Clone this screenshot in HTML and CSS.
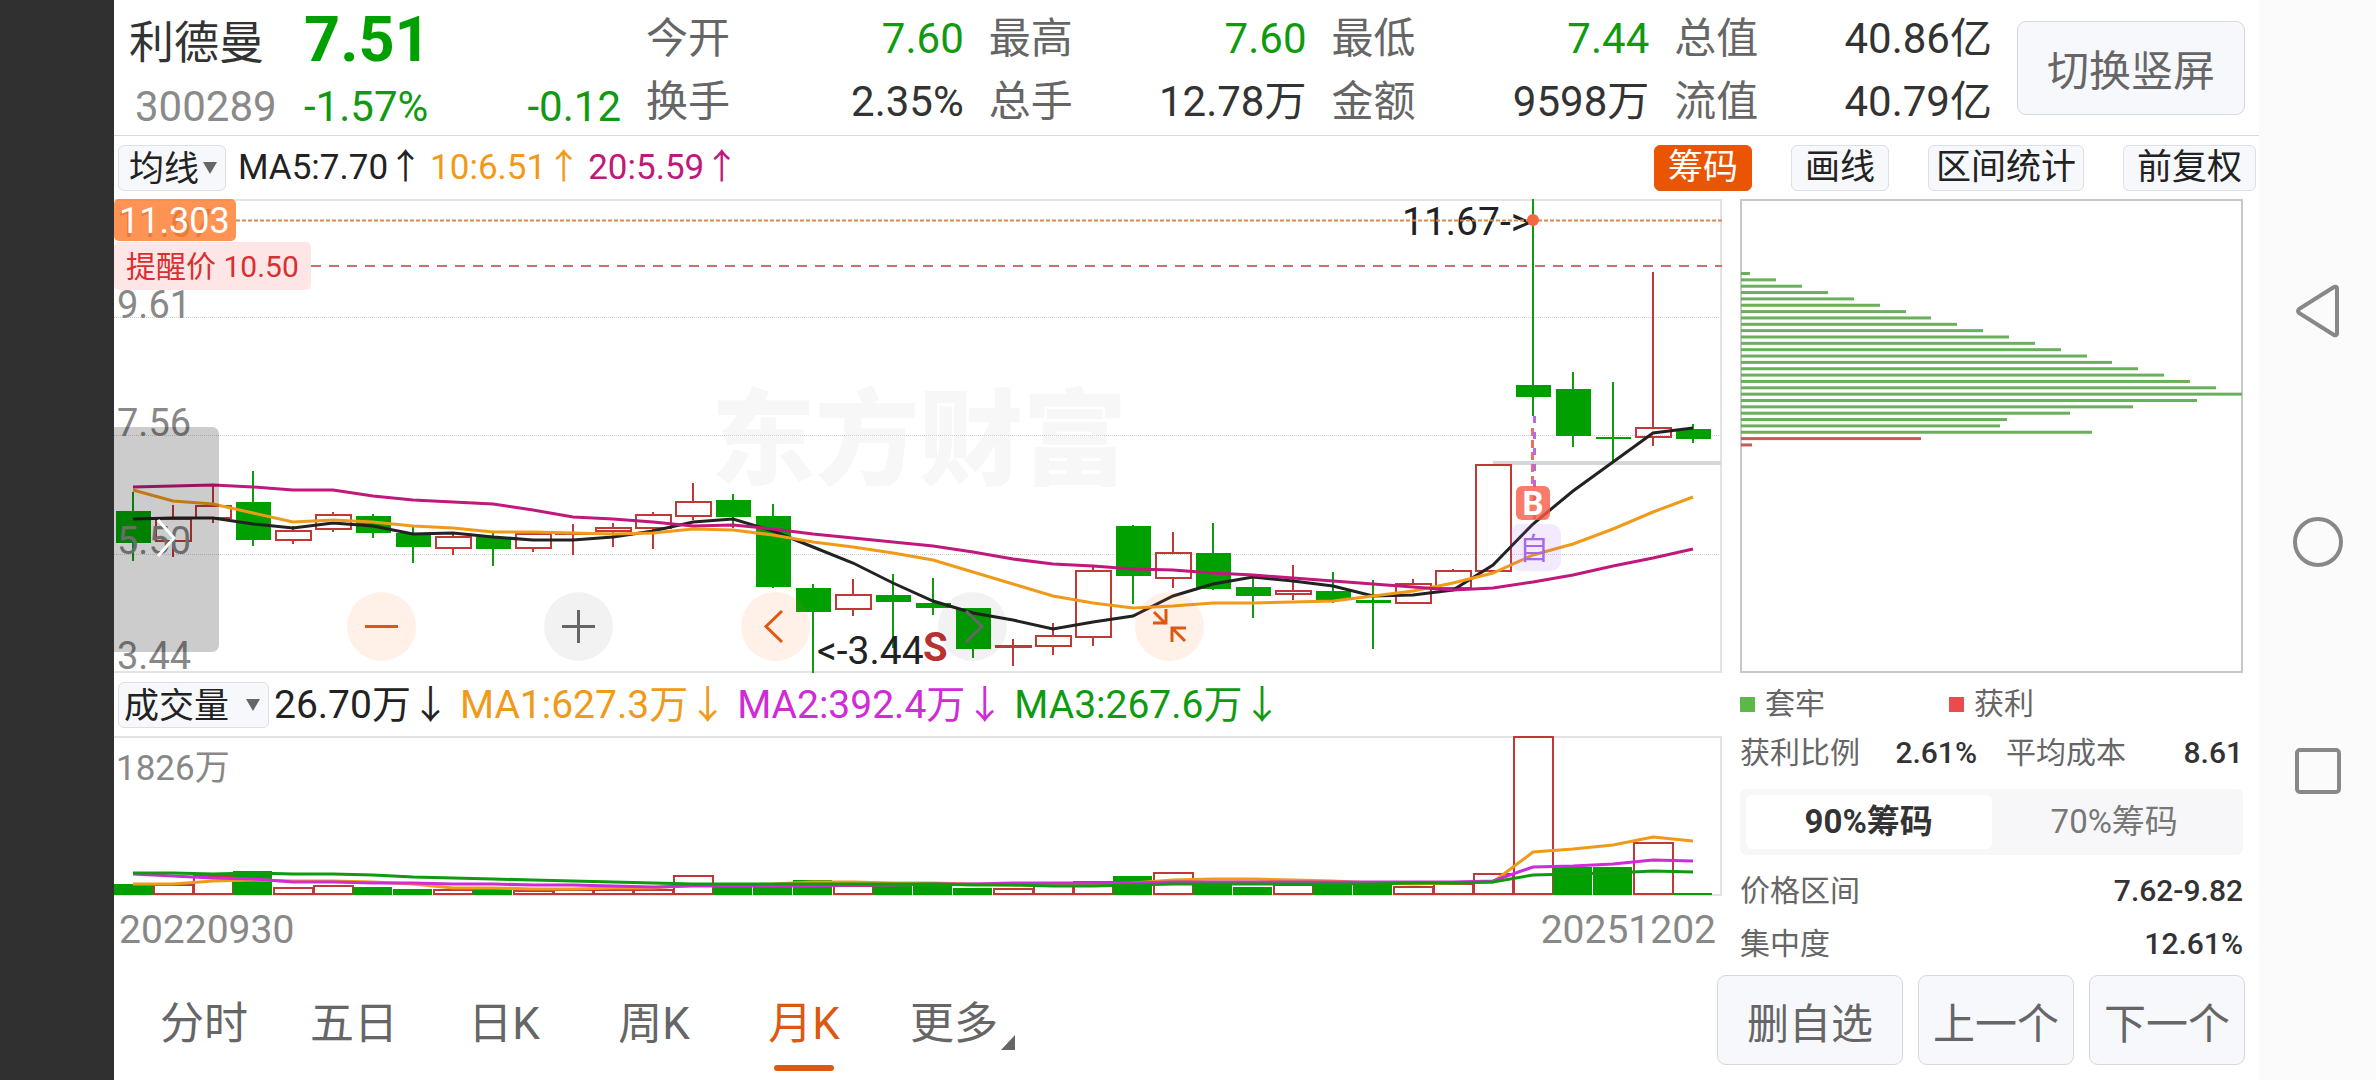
FILE: index.html
```
<!DOCTYPE html>
<html lang="zh-CN">
<head>
  <meta charset="UTF-8" />
  <meta name="viewport" content="width=device-width, initial-scale=1.0" />
  <title>利德曼 300289</title>
  <link rel="stylesheet" href="styles.css">
</head>
<body>
  <div class="screen">
    <div class="app">
      <header class="header">
        <div class="quote">
          <div class="name">利德曼</div>
          <div class="price">7.51</div>
          <div class="code">300289</div>
          <div class="change"><span>-1.57%</span><span>-0.12</span></div>
        </div>
        <dl class="stats">
          <div class="stat"><dt>今开</dt><dd class="down">7.60</dd></div>
          <div class="stat"><dt>最高</dt><dd class="down">7.60</dd></div>
          <div class="stat"><dt>最低</dt><dd class="down">7.44</dd></div>
          <div class="stat"><dt>总值</dt><dd>40.86亿</dd></div>
          <div class="stat"><dt>换手</dt><dd>2.35%</dd></div>
          <div class="stat"><dt>总手</dt><dd>12.78万</dd></div>
          <div class="stat"><dt>金额</dt><dd>9598万</dd></div>
          <div class="stat"><dt>流值</dt><dd>40.79亿</dd></div>
        </dl>
        <button class="button rotate">切换竖屏</button>
      </header>

      <div class="toolbar">
        <div class="picker">
          <select class="select" aria-label="主图指标"><option>均线</option></select>
        </div>
        <div class="legend">
          <span class="black">MA5:7.70<i>↑</i></span>
          <span class="orange">10:6.51<i>↑</i></span>
          <span class="magenta">20:5.59<i>↑</i></span>
        </div>
        <div class="tools">
          <button class="tool active">筹码</button>
          <button class="tool">画线</button>
          <button class="tool wide">区间统计</button>
          <button class="tool">前复权</button>
        </div>
      </div>

      <main class="main">
        <div class="charts">
          <div class="kline">
            <svg class="chart" id="kline" viewBox="0 0 1608 474" role="img" aria-label="月K线图">
              <text class="watermark" x="597" y="278">东方财富</text>
              <g class="grid-lines">
                <path d="M0 118.500H1608M0 236.500H1608M0 355.500H1608" />
              </g>
              <path class="frame" d="M0 1H1607V473H0" />
              <path class="gap-line" d="M1379 264H1607" />
              <g id="candles"></g>
              <g class="axis">
                <text x="3" y="38">11.67</text>
                <text x="3" y="119">9.61</text>
                <text x="3" y="237">7.56</text>
                <text x="3" y="355">5.50</text>
                <text x="3" y="470">3.44</text>
              </g>
              <g id="averages"></g>
              <text class="mark" x="1288" y="36">11.67-&gt;</text>
              <text class="mark" x="703" y="465">&lt;-3.44</text>
              <text class="sell" x="809" y="462">S</text>
              <path class="cost-line" d="M122 21.500H1608" />
              <path class="alert-line" d="M197 67H1608" />
              <circle class="dot" cx="1419" cy="21" r="6" />
              <path class="buy-line" d="M1418.500 229V288" />
              <path class="self-line" d="M1420.500 217V322" />
              <rect class="buy-box" x="1402" y="287" width="34" height="34" rx="6" />
              <text class="buy" x="1419" y="316">B</text>
              <rect class="self-box" x="1396" y="325" width="51" height="47" rx="10" />
              <text class="self" x="1420" y="360">自</text>
              <rect class="cost-box" x="0" y="0" width="122" height="42" rx="5" />
              <text class="cost" x="5" y="34">11.303</text>
              <rect class="alert-box" x="0" y="43" width="197" height="48" rx="5" />
              <text class="alert" x="12" y="78">提醒价 10.50</text>
            </svg>
            <button class="drawer" aria-label="展开">
              <svg width="20" height="40" viewBox="0 0 20 40"><path d="M2 2l16 18L2 38" /></svg>
            </button>
            <div class="controls">
              <button class="round warm" aria-label="缩小">
                <svg viewBox="0 0 69 69"><path d="M18 34.500h33" /></svg>
              </button>
              <button class="round" aria-label="放大">
                <svg viewBox="0 0 69 69"><path d="M18 34.500h33M34.500 18v33" /></svg>
              </button>
              <button class="round warm" aria-label="左移">
                <svg viewBox="0 0 69 69"><path d="M41 19L25 34.500 41 50" /></svg>
              </button>
              <button class="round" aria-label="右移">
                <svg viewBox="0 0 69 69"><path d="M28 19l16 15.500L28 50" /></svg>
              </button>
              <button class="round warm" aria-label="收起">
                <svg viewBox="0 0 69 69"><path d="M19 20l12 12M31 17v14H18M51 36H37v14M38 37l12 12" /></svg>
              </button>
            </div>
          </div>

          <div class="volume-bar">
            <div class="picker volume-picker">
              <select class="select" aria-label="副图指标"><option>成交量</option></select>
            </div>
            <div class="legend volume-legend">
              <span class="black">26.70万<i>↓</i></span>
              <span class="orange">MA1:627.3万<i>↓</i></span>
              <span class="violet">MA2:392.4万<i>↓</i></span>
              <span class="green">MA3:267.6万<i>↓</i></span>
            </div>
          </div>

          <svg class="chart" id="volume" viewBox="0 0 1608 160" role="img" aria-label="成交量">
            <path class="frame" d="M0 1H1607V159H0" />
            <text class="scale" x="2" y="44">1826万</text>
            <g id="bars"></g>
            <g id="volumeAverages"></g>
          </svg>

          <div class="dates"><span>20220930</span><span>20251202</span></div>
        </div>

        <aside class="chips">
          <svg class="chart" id="chips" viewBox="0 0 503 474" role="img" aria-label="筹码分布">
            <rect class="chips-frame" x="1" y="1" width="501" height="472" />
          </svg>
          <div class="chips-legend">
            <span class="key trapped">套牢</span>
            <span class="key profit">获利</span>
          </div>
          <div class="pair">
            <div class="row"><span>获利比例</span><b>2.61%</b></div>
            <div class="row"><span>平均成本</span><b>8.61</b></div>
          </div>
          <div class="segment">
            <button class="seg active">90%筹码</button>
            <button class="seg">70%筹码</button>
          </div>
          <div class="row tall"><span>价格区间</span><b>7.62-9.82</b></div>
          <div class="row tall"><span>集中度</span><b>12.61%</b></div>
        </aside>
      </main>

      <footer class="footer">
        <nav class="tabs">
          <a class="tab" href="#">分时</a>
          <a class="tab" href="#">五日</a>
          <a class="tab" href="#">日K</a>
          <a class="tab" href="#">周K</a>
          <a class="tab active" href="#">月K</a>
          <a class="tab more" href="#">更多</a>
        </nav>
        <div class="actions">
          <button class="button remove">删自选</button>
          <button class="button">上一个</button>
          <button class="button">下一个</button>
        </div>
      </footer>
    </div>

    <div class="system">
      <button class="system-key" aria-label="返回">
        <svg width="50" height="54" viewBox="0 0 50 54"><path d="M44 4v46a2 2 0 0 1-3 1L6 29a3 3 0 0 1 0-4L41 3a2 2 0 0 1 3 1z" /></svg>
      </button>
      <button class="system-key" aria-label="主页">
        <svg width="54" height="54" viewBox="0 0 54 54"><circle cx="27" cy="27" r="23" /></svg>
      </button>
      <button class="system-key" aria-label="最近任务">
        <svg width="50" height="50" viewBox="0 0 50 50"><rect x="4" y="4" width="42" height="42" rx="3" /></svg>
      </button>
    </div>
  </div>

  <script src="script.js"></script>
</body>
</html>
```
FILE: styles.css
```
* {
  box-sizing: border-box;
}

body {
  margin: 0;
  font-family: Roboto, "Noto Sans CJK SC", sans-serif;
  background-color: #303030;
  color: #333;
}

button,
select {
  font-family: inherit;
  margin: 0;
  padding: 0;
  border: none;
  background: none;
  cursor: pointer;
}

.screen {
  display: grid;
  grid-template-columns: minmax(0, 1fr) 117px;
  min-height: 100vh;
  padding-left: 114px;
}

.app {
  display: flex;
  flex-direction: column;
  background-color: #fff;
}

/* header */
.header {
  display: flex;
  align-items: center;
  height: 136px;
  padding: 0 14px 0 15px;
  border-bottom: 1px solid #d9d9d9;
}

.quote {
  display: grid;
  grid-template-columns: 175px 317px;
  grid-template-rows: 78px 57px;
  align-items: center;
  width: 517px;
}

.name {
  font-size: 45px;
}

.price {
  font-size: 63px;
  font-weight: 700;
  color: #00a000;
}

.code {
  padding-left: 6px;
  font-size: 42px;
  color: #8a8a8a;
}

.change {
  display: flex;
  justify-content: space-between;
  font-size: 42px;
  color: #109a10;
}

.stats {
  flex: 1;
  display: grid;
  grid-template-columns: repeat(4, 1fr);
  margin: 0;
  padding-top: 4px;
  font-size: 42px;
  line-height: 63px;
}

.stat {
  display: flex;
  justify-content: space-between;
  padding-right: 25px;
}

.stat dt {
  color: #666;
}

.stat dd {
  margin: 0;
}

.stat .down {
  color: #109a10;
}

.button {
  height: 90px;
  padding: 0 14px;
  border: 1px solid #d5d8dc;
  border-radius: 9px;
  background-color: #f7f8fb;
  color: #666;
  font-size: 42px;
}

.rotate {
  height: 94px;
  padding: 0 29px;
}

/* indicator rows */
.toolbar,
.volume-bar {
  display: flex;
  align-items: center;
  height: 63px;
  padding: 0 3px 0 4px;
}

.picker {
  position: relative;
  width: 108px;
}

.volume-picker {
  width: 151px;
}

.select {
  appearance: none;
  display: block;
  width: 100%;
  height: 46px;
  padding: 3px 0 0 10px;
  border: 1px solid #dcdfe3;
  border-radius: 6px;
  background-color: #f7f8fb;
  color: #222;
  font-size: 35px;
}

.volume-picker .select {
  padding-left: 5px;
}

.picker::after {
  content: "";
  position: absolute;
  right: 9px;
  top: 17px;
  border: 7px solid transparent;
  border-top: 12px solid #666;
  border-bottom: none;
  pointer-events: none;
}

.legend {
  display: flex;
  gap: 7px;
  padding-left: 12px;
  font-size: 35px;
  line-height: 44px;
}

.volume-legend {
  gap: 10px;
  padding-left: 5px;
  font-size: 39px;
}

.legend i {
  font-style: normal;
}

.black {
  color: #222;
}

.orange {
  color: #f09a1a;
}

.magenta {
  color: #c0187c;
}

.violet {
  color: #cf2bd6;
}

.green {
  color: #109a10;
}

.tools {
  display: flex;
  gap: 39px;
  margin-left: auto;
}

.tool {
  height: 46px;
  padding: 0 13px;
  border: 1px solid #dcdfe3;
  border-radius: 6px;
  background-color: #f7f8fb;
  color: #222;
  font-size: 35px;
  line-height: 42px;
}

.tool.wide {
  padding: 0 7px;
}

.tool.active {
  border-color: #ea5504;
  background-color: #ea5504;
  color: #fff;
}

/* charts */
.main {
  display: grid;
  grid-template-columns: minmax(0, 1608fr) minmax(0, 503fr);
  gap: 18px;
  padding-right: 16px;
}

.chart {
  display: block;
  width: 100%;
  overflow: visible;
}

.chart path,
.chart polyline {
  fill: none;
}

.kline {
  position: relative;
}

.watermark {
  fill: #f7f7f7;
  font-size: 104px;
  font-weight: 900;
}

.frame {
  stroke: #e3e3e3;
  stroke-width: 2;
}

.grid-lines {
  stroke: #d0d0d0;
  stroke-dasharray: 1 1;
}

.gap-line {
  stroke: #d3d6da;
  stroke-width: 4;
}

.axis {
  fill: #888;
  font-size: 38px;
}

.mark {
  fill: #222;
  font-size: 39px;
}

.scale {
  fill: #888;
  font-size: 35px;
}

.sell {
  fill: #b93232;
  font-size: 40px;
  font-weight: 700;
}

.up-candle {
  fill: none;
  stroke: #c03838;
  stroke-width: 2;
}

.down-candle {
  fill: #00a000;
  stroke: none;
}

.up-wick {
  stroke: #c03838;
  stroke-width: 2;
}

.down-wick {
  stroke: #109a10;
  stroke-width: 2;
}

.average {
  stroke: currentColor;
  stroke-width: 3;
}

.cost-line {
  stroke: #d88a50;
  stroke-width: 2;
  stroke-dasharray: 4 2;
}

.alert-line {
  stroke: #c87070;
  stroke-width: 2;
  stroke-dasharray: 10 8;
}

.dot {
  fill: #f5673f;
}

.buy-line {
  stroke: #f07060;
  stroke-width: 3;
  stroke-dasharray: 8 4;
}

.self-line {
  stroke: #b56be6;
  stroke-width: 3;
  stroke-dasharray: 7 9;
}

.buy-box {
  fill: #fa5a46;
  fill-opacity: 0.8;
}

.buy {
  fill: #fff;
  font-size: 33px;
  font-weight: 700;
  text-anchor: middle;
}

.self-box {
  fill: #a05af0;
  fill-opacity: 0.12;
}

.self {
  fill: #a868e4;
  font-size: 30px;
  text-anchor: middle;
}

.cost-box {
  fill: #ff7828;
  fill-opacity: 0.8;
}

.cost {
  fill: #fff;
  font-size: 36px;
}

.alert-box {
  fill: #fee6e6;
}

.alert {
  fill: #d83030;
  font-size: 30px;
}

.drawer {
  position: absolute;
  left: 0;
  top: 228px;
  width: 105px;
  height: 225px;
  padding-right: 2px;
  border-radius: 0 7px 7px 0;
  background-color: rgba(0, 0, 0, 0.2);
}

.drawer path {
  fill: none;
  stroke: #fff;
  stroke-width: 3;
}

.controls {
  position: absolute;
  left: 233px;
  bottom: 12px;
  display: flex;
  gap: 128px;
}

.round {
  width: 69px;
  height: 69px;
  border-radius: 50%;
  background-color: rgba(0, 0, 0, 0.05);
  color: #666;
}

.round.warm {
  background-color: rgba(255, 110, 30, 0.1);
  color: #dd5912;
}

.round svg {
  display: block;
}

.round path {
  fill: none;
  stroke: currentColor;
  stroke-width: 3;
}

.dates {
  display: flex;
  justify-content: space-between;
  padding: 11px 6px 0 5px;
  font-size: 39px;
  color: #888;
}

/* chip distribution */
.chips-frame {
  fill: none;
  stroke: #c8c8c8;
  stroke-width: 2;
}

.chip-trapped {
  fill: #6ab05c;
}

.chip-profit {
  fill: #c85a5a;
}

.chips {
  color: #666;
  font-size: 30px;
  line-height: 36px;
}

.chips-legend {
  display: grid;
  grid-template-columns: 209px 1fr;
  height: 62px;
}

.key {
  display: flex;
  align-items: center;
  gap: 10px;
}

.key::before {
  content: "";
  width: 15px;
  height: 15px;
}

.trapped::before {
  background-color: #5cb848;
}

.profit::before {
  background-color: #e84c4c;
}

.pair {
  display: grid;
  grid-template-columns: 237px 1fr;
  gap: 29px;
}

.row {
  display: flex;
  justify-content: space-between;
  align-items: center;
}

.row b {
  font-weight: 500;
  color: #333;
}

.row.tall {
  height: 53px;
}

.segment {
  display: grid;
  grid-template-columns: 1fr 1fr;
  height: 66px;
  margin: 18px 0 9px;
  padding: 6px;
  border-radius: 6px;
  background-color: #f7f7fa;
}

.seg {
  border-radius: 6px;
  color: #777;
  font-size: 33px;
  line-height: 50px;
}

.seg.active {
  background-color: #fff;
  color: #333;
  font-weight: 700;
}

/* bottom bar */
.footer {
  display: flex;
  justify-content: space-between;
  align-items: flex-end;
  margin-top: auto;
  padding: 0 14px 15px 15px;
}

.tabs {
  display: flex;
}

.tab {
  position: relative;
  width: 150px;
  text-align: center;
  text-decoration: none;
  font-size: 44px;
  line-height: 82px;
  color: #666;
}

.tab.active {
  color: #dd5912;
}

.tab.active::after {
  content: "";
  position: absolute;
  left: 45px;
  bottom: -6px;
  width: 60px;
  height: 6px;
  border-radius: 3px;
  background-color: #dd5912;
}

.tab.more::after {
  content: "";
  position: absolute;
  right: 14px;
  bottom: 15px;
  border-left: 14px solid transparent;
  border-bottom: 15px solid #666;
}

.actions {
  display: flex;
  gap: 15px;
}

.remove {
  padding: 0 29px;
}

/* system navigation */
.system {
  display: flex;
  flex-direction: column;
  justify-content: center;
  align-items: center;
  gap: 177px;
  background-color: #fbfbfb;
}

.system-key svg {
  display: block;
  fill: none;
  stroke: #888;
  stroke-width: 4;
}
```
FILE: script.js
```
const NS = "http://www.w3.org/2000/svg";
const STEP = 40;
const FIRST = 19;

// [direction, body top, body bottom, high, low]
const candles = [
  ["d", 312, 344, 293, 362], ["u", 320, 342, 306, 358], ["u", 307, 319, 286, 324], ["d", 303, 341, 272, 347],
  ["u", 332, 341, 327, 345], ["u", 316, 330, 313, 333], ["d", 317, 334, 315, 339], ["d", 334, 348, 328, 364],
  ["u", 338, 349, 333, 356], ["d", 338, 350, 334, 367], ["u", 335, 349, 335, 353], ["u", 334, 335, 325, 356],
  ["u", 329, 332, 324, 348], ["u", 316, 329, 313, 350], ["u", 303, 317, 284, 321], ["d", 301, 318, 295, 329],
  ["d", 317, 388, 305, 389], ["d", 389, 413, 385, 474], ["u", 396, 410, 380, 417], ["d", 396, 403, 375, 449],
  ["d", 404, 409, 379, 416], ["d", 409, 450, 409, 459], ["u", 447, 448, 440, 467], ["u", 437, 447, 424, 456],
  ["u", 372, 438, 368, 447], ["d", 327, 377, 326, 405], ["u", 354, 379, 333, 389], ["d", 354, 390, 324, 391],
  ["d", 388, 397, 379, 419], ["u", 392, 395, 366, 401], ["d", 392, 401, 373, 404], ["d", 401, 404, 381, 450],
  ["u", 385, 404, 380, 404], ["u", 372, 389, 370, 389], ["u", 266, 372, 266, 372], ["d", 186, 198, 0, 217],
  ["d", 190, 237, 173, 248], ["d", 238, 240, 183, 262], ["u", 229, 238, 73, 247], ["d", 230, 240, 225, 244]
];

const averages = {
  black: [320, 319, 319, 325, 329, 324, 327, 335, 334, 338, 341, 341, 338, 332, 323, 320, 332, 348, 364, 384,
    402, 414, 421, 430, 423, 417, 397, 385, 378, 382, 387, 397, 396, 391, 366, 325, 292, 263, 234, 229],
  orange: [291, 302, 305, 314, 323, 321, 323, 327, 329, 333, 333, 334, 335, 334, 330, 331, 336, 343, 348, 354,
    361, 373, 385, 397, 404, 409, 407, 404, 404, 403, 402, 397, 392, 384, 374, 356, 345, 330, 313, 298],
  magenta: [288, 287, 286, 288, 291, 291, 297, 301, 303, 305, 311, 318, 320, 323, 327, 326, 330, 335, 339, 343,
    347, 353, 360, 365, 367, 370, 371, 374, 376, 379, 382, 385, 388, 391, 389, 383, 376, 367, 359, 350]
};

// top edge of every volume bar
const volumes = [148, 149, 140, 135, 152, 150, 151, 153, 154, 153, 155, 154, 154, 154, 140, 151, 151, 144, 150, 148,
  148, 152, 153, 148, 146, 140, 137, 147, 151, 149, 147, 146, 151, 148, 138, 1, 131, 131, 107, 157];

const volumeAverages = {
  orange: [148, 148, 145, 144, 145, 145, 146, 148, 152, 152, 153, 153, 152, 152, 149, 149, 148, 146, 146, 147,
    147, 148, 149, 149, 149, 147, 144, 143, 143, 144, 145, 147, 148, 147, 146, 116, 113, 109, 101, 105],
  violet: [138, 140, 142, 143, 146, 146, 147, 147, 148, 148, 149, 149, 150, 151, 150, 150, 150, 150, 149, 149,
    148, 148, 147, 147, 147, 147, 146, 146, 146, 146, 146, 146, 146, 146, 145, 131, 130, 128, 124, 125],
  green: [137, 137, 138, 137, 138, 138, 139, 141, 142, 143, 144, 145, 146, 147, 148, 148, 148, 148, 148, 148,
    148, 149, 149, 150, 150, 149, 148, 148, 148, 148, 148, 148, 147, 147, 146, 139, 138, 137, 135, 136]
};

const chips = [9, 35, 61, 87, 113, 139, 165, 190, 216, 242, 268, 294, 320, 346, 371, 397, 423, 449, 475, 501,
  456, 392, 329, 266, 259, 351, 180, 11];
const PROFIT_FROM = 26;

function draw(parent, tag, attrs) {
  const el = document.createElementNS(NS, tag);
  for (const key in attrs) {
    el.setAttribute(key, attrs[key]);
  }
  parent.appendChild(el);
}

function drawLines(parent, lines) {
  for (const name in lines) {
    const points = lines[name].map((y, i) => `${FIRST + i * STEP},${y}`).join(" ");
    draw(parent, "polyline", { class: "average " + name, points: points });
  }
}

const candleLayer = document.getElementById("candles");
candles.forEach(([dir, top, bottom, high, low], i) => {
  const x = FIRST + i * STEP;
  if (dir === "u") {
    draw(candleLayer, "path", { class: "up-wick", d: `M${x} ${high}V${top}M${x} ${bottom}V${low}` });
    draw(candleLayer, "rect", { class: "up-candle", x: x - 17, y: top, width: 35, height: bottom - top });
  } else {
    draw(candleLayer, "path", { class: "down-wick", d: `M${x} ${high}V${low}` });
    draw(candleLayer, "rect", { class: "down-candle", x: x - 17, y: top, width: 35, height: bottom - top });
  }
});
drawLines(document.getElementById("averages"), averages);

const barLayer = document.getElementById("bars");
volumes.forEach((top, i) => {
  const x = Math.max(0, FIRST + i * STEP - 20);
  if (candles[i][0] === "u" || i === 35) {
    draw(barLayer, "rect", { class: "up-candle", x: x + 1, y: top, width: 39, height: 158 - top });
  } else {
    draw(barLayer, "rect", { class: "down-candle", x: x, y: top, width: 39, height: 159 - top });
  }
});
drawLines(document.getElementById("volumeAverages"), volumeAverages);

const chipLayer = document.getElementById("chips");
chips.forEach((width, i) => {
  const side = i < PROFIT_FROM ? "chip-trapped" : "chip-profit";
  draw(chipLayer, "rect", { class: side, x: 1, y: 73 + i * 6.35, width: width, height: 3 });
});
```
